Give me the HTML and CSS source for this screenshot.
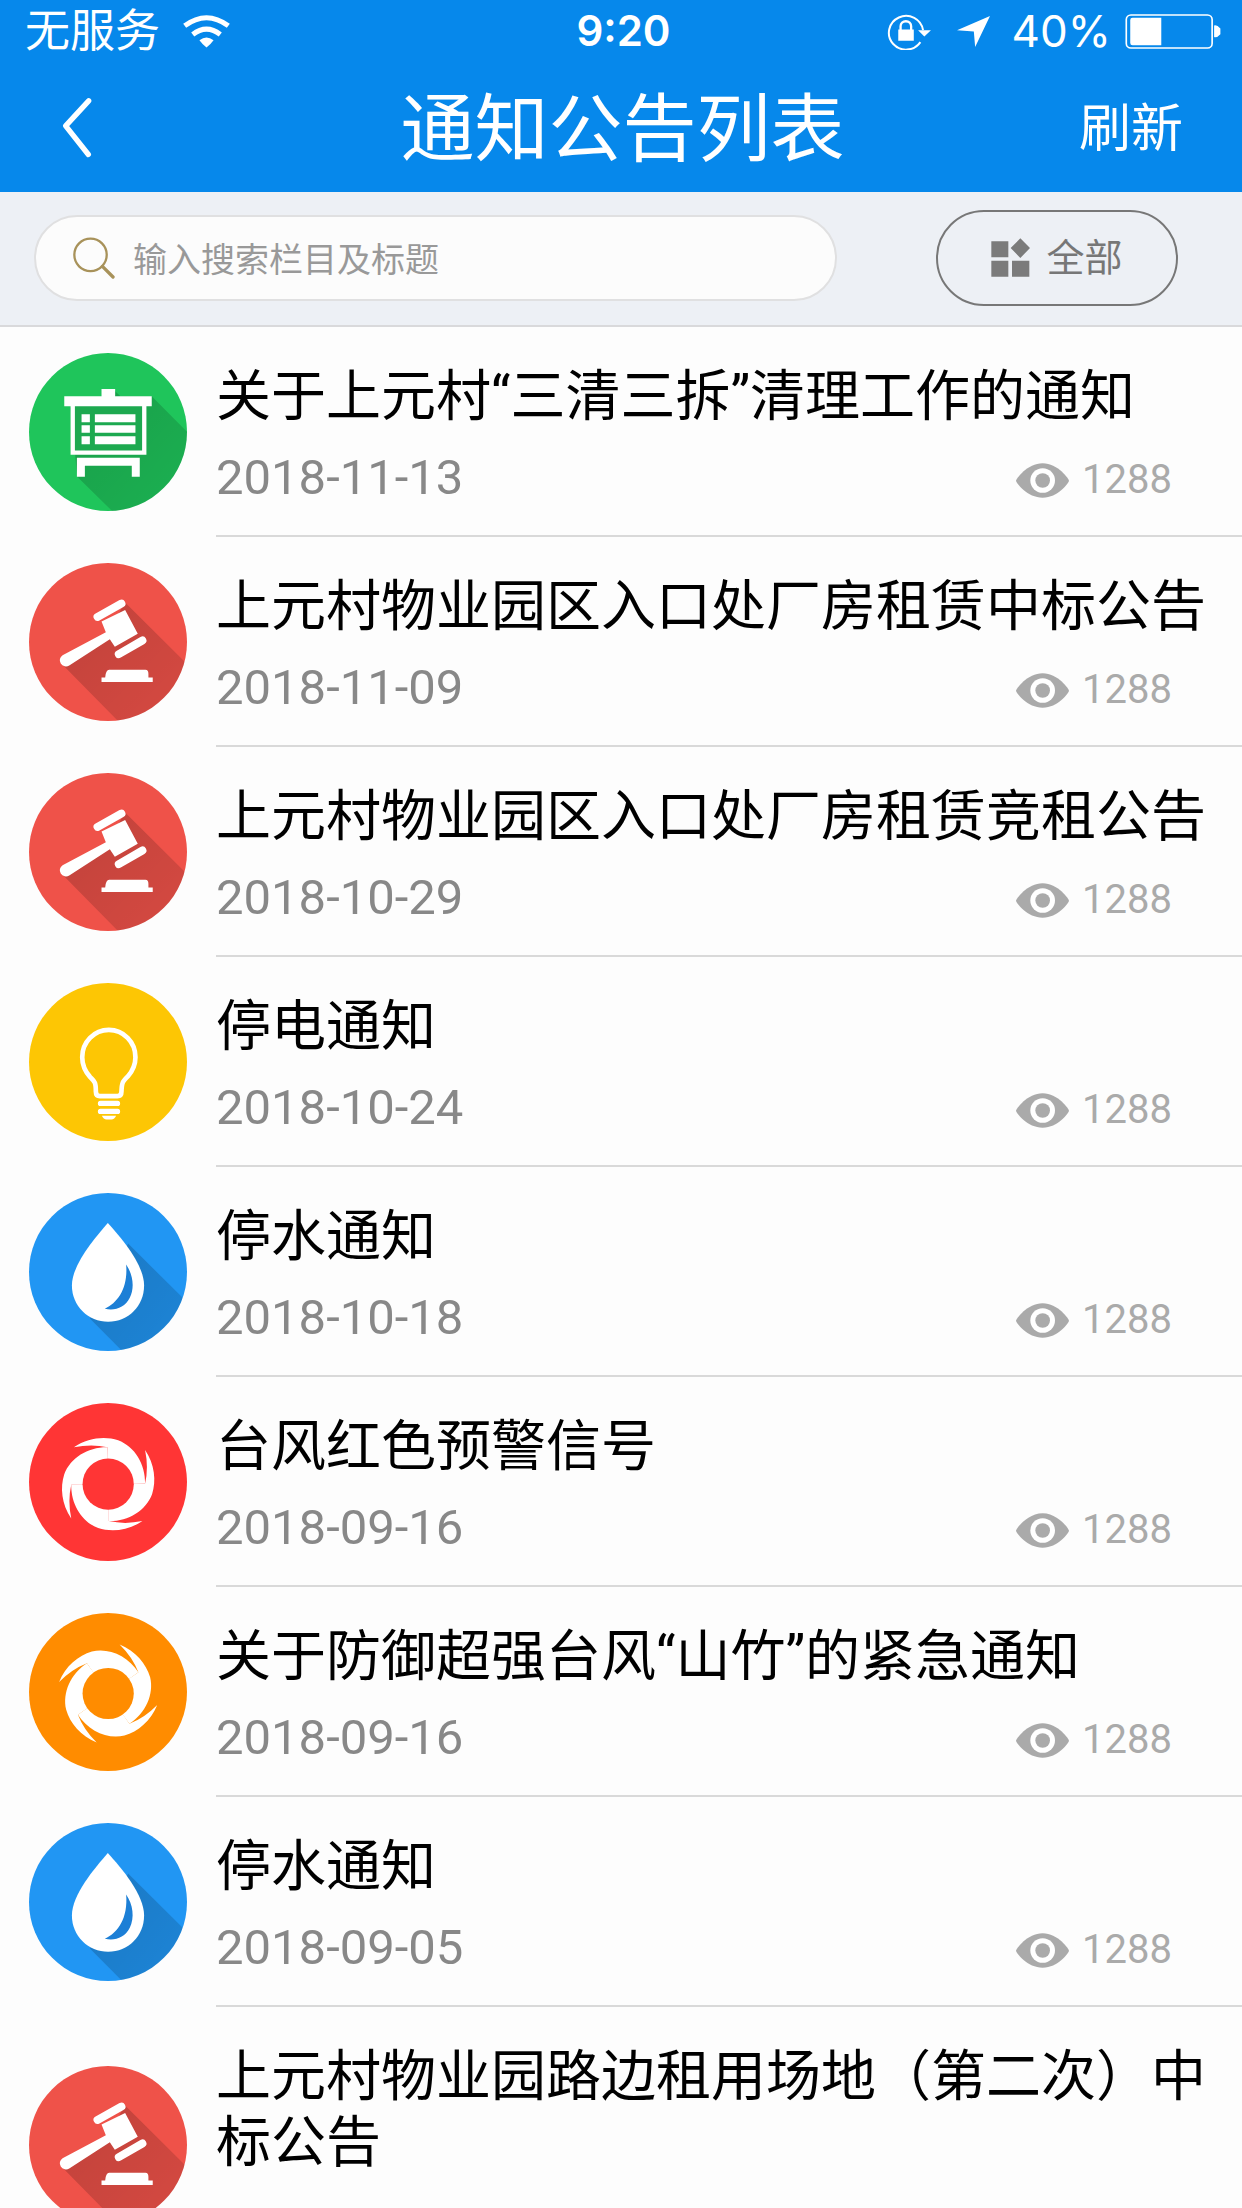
FILE: index.html
```html
<!DOCTYPE html>
<html lang="zh-CN">
<head>
<meta charset="utf-8">
<meta name="viewport" content="width=device-width, initial-scale=1">
<title>通知公告列表</title>
<link rel="stylesheet" href="styles.css">
</head>
<body>
<svg class="sprite" aria-hidden="true">
  <defs>
    <linearGradient id="shade" x1="0" y1="0" x2="1" y2="1">
      <stop offset="0" stop-color="#000" stop-opacity=".2"/>
      <stop offset="1" stop-color="#000" stop-opacity=".06"/>
    </linearGradient>
    <symbol id="board" viewBox="87 65 475 475">
      <path fill="url(#shade)" d="M346 180L362 195H456L700 440V720H520L232 437L212 230Z"/>
      <path fill="#fff" d="M305 173H346V195H456V225H440V371H212V225H193V195H305Z"/>
      <path fill="#1da950" d="M225 225H427V358H225Z"/>
      <path fill="#fff" d="M245 249H270V273H245ZM285 249H407V273H285ZM245 282H270V305H245ZM285 282H407V305H285ZM245 315H270V339H245ZM285 315H407V339H285ZM231 380H420V437H396V404H255V437H231Z"/>
    </symbol>
    <symbol id="gavel" viewBox="87 67 475 475">
      <path fill="url(#shade)" d="M376 186L700 507V720H530L188 373L320 280Z"/>
      <path fill="none" stroke="#fff" stroke-width="24" stroke-linecap="round" d="M293 229L365 189M357 341L428 300"/>
      <path fill="#fff" d="M305 243L376 208L414 280L345 319L330 296L208 375A18 18 0 0 1 188 344L318 275Z"/>
      <path fill="#fff" d="M305 411H316Q318 388 328 388H437Q446 388 446 400V411H459V425H305Z"/>
    </symbol>
    <symbol id="bulb" viewBox="87 69 475 475">
      <path fill="none" stroke="#fff" stroke-width="14" d="M288 395C288 366 284 365 271 352C255 334 247 318 247 292A80 82 0 0 1 407 292C407 320 397 335 384 350C368 366 366 368 365 395Q365 409 353 409H300Q288 409 288 395Z"/>
      <path stroke="#fff" stroke-width="16" stroke-linecap="round" d="M302 431H353M302 455H353"/>
      <path fill="#fff" d="M306 468H349Q344 479 335 479H320Q311 479 306 468Z"/>
    </symbol>
    <symbol id="drop" viewBox="87 700 475 475">
      <path fill="url(#shade)" d="M385 852L700 1165V1410H600L270 1077Z"/>
      <path fill="#fff" d="M324 790C285 835 216 915 216 978C216 1040 265 1087 325 1087C385 1087 433 1040 433 978C433 915 365 835 324 790Z"/>
      <path fill="#1c7fd6" d="M379 915C400 945 405 985 390 1015C375 1045 345 1055 315 1048C355 1030 385 985 379 915Z"/>
    </symbol>
    <g id="blade">
      <path d="M-1 1L-2 -111Q-50 -122 -103 -111C-60 -140 -10 -145 30 -132C80 -113 112 -60 111 -2L1 1Z"/>
    </g>
    <symbol id="swirl" viewBox="-238 -244 475 475">
      <g fill="#fff">
        <use href="#blade"/>
        <use href="#blade" transform="rotate(90)"/>
        <use href="#blade" transform="rotate(180)"/>
        <use href="#blade" transform="rotate(270)"/>
      </g>
      <circle r="77" fill="currentColor"/>
    </symbol>
    <symbol id="swirl-turned" viewBox="-238 -242 475 475">
      <g fill="#fff" transform="rotate(56)">
        <use href="#blade"/>
        <use href="#blade" transform="rotate(90)"/>
        <use href="#blade" transform="rotate(180)"/>
        <use href="#blade" transform="rotate(270)"/>
      </g>
      <circle r="77" fill="currentColor"/>
    </symbol>
    <symbol id="eye" viewBox="237 297 159 104">
      <path fill="#aaa" d="M237 350C237 344 271 297 317 297C362 297 396 344 396 350C396 356 362 401 317 401C271 401 237 356 237 350Z"/>
      <circle cx="317" cy="349" r="37" fill="#fff"/>
      <circle cx="317" cy="349" r="22" fill="#aaa"/>
    </symbol>
  </defs>
</svg>

<div class="app">
  <header class="header">
    <div class="status">
      <div class="status-left">
        <span class="carrier">无服务</span>
        <svg class="wifi" viewBox="0 0 140 98" aria-hidden="true">
          <g fill="none" stroke="#fff" stroke-width="15"><path d="M5 32Q70 -16 135 32"/><path d="M29 58Q70 26 111 58"/></g>
          <path fill="#fff" d="M49 75Q70 58 91 75Q85 84 70 97Q55 84 49 75Z"/>
        </svg>
      </div>
      <span class="clock">9:20</span>
      <div class="status-right">
        <svg class="lock" viewBox="78 32 136 112" aria-hidden="true">
          <path fill="none" stroke="#fff" stroke-width="6" d="M182 120A52 51 0 1 1 190 84"/>
          <path fill="#fff" d="M175 84H214L194 103ZM115 82H162V116H115Z"/>
          <path fill="none" stroke="#fff" stroke-width="7" d="M122 84V72A16 15 0 0 1 154 72V84"/>
        </svg>
        <svg class="arrow" viewBox="290 44 100 94" aria-hidden="true"><path fill="#fff" d="M390 44L345 138L341 91L290 87Z"/></svg>
        <span class="percent">40%</span>
        <svg class="battery" viewBox="794 38 292 106" aria-hidden="true">
          <rect x="797" y="41" width="260" height="100" rx="14" fill="none" stroke="#fff" stroke-width="5"/>
          <path fill="#fff" d="M816 49H903V133H816Q809 133 809 126V56Q809 49 816 49ZM1063 73Q1071 70 1082 82V99Q1071 111 1063 108Z"/>
        </svg>
      </div>
    </div>
    <nav class="nav">
      <button class="back" type="button" aria-label="返回">
        <svg class="chevron" viewBox="188 288 90 182" aria-hidden="true"><path fill="none" stroke="#fff" stroke-width="16" stroke-linecap="round" stroke-linejoin="round" d="M268 299L199 374L267 460"/></svg>
      </button>
      <h1 class="title">通知公告列表</h1>
      <button class="refresh" type="button">刷新</button>
    </nav>
  </header>

  <form class="tools">
    <label class="search">
      <svg class="glass" viewBox="218 709 127 127" aria-hidden="true">
        <g fill="none" stroke="#a8925a"><circle cx="271" cy="763" r="49" stroke-width="7"/><path stroke-width="10" stroke-linecap="round" d="M307 798L339 830"/></g>
      </svg>
      <input class="field" type="search" placeholder="输入搜索栏目及标题" aria-label="输入搜索栏目及标题">
    </label>
    <button class="filter" type="button">
      <svg class="tiles" viewBox="396 712 117 117" aria-hidden="true"><path fill="#7b7b7b" d="M397 722H448V770H397ZM397 780H448V828H397ZM459 780H511V828H459ZM484 713L513 742L484 772L455 742Z"/></svg>
      全部
    </button>
  </form>

  <main class="list-wrap">
    <ul class="list">
      <li><a class="row" href="#"><svg class="badge green"><use href="#board"/></svg><div class="body"><h2 class="name">关于上元村“三清三拆”清理工作的通知</h2><div class="meta"><time class="date">2018-11-13</time><span class="views"><svg class="eye"><use href="#eye"/></svg>1288</span></div></div></a></li>
      <li><a class="row" href="#"><svg class="badge coral"><use href="#gavel"/></svg><div class="body"><h2 class="name">上元村物业园区入口处厂房租赁中标公告</h2><div class="meta"><time class="date">2018-11-09</time><span class="views"><svg class="eye"><use href="#eye"/></svg>1288</span></div></div></a></li>
      <li><a class="row" href="#"><svg class="badge coral"><use href="#gavel"/></svg><div class="body"><h2 class="name">上元村物业园区入口处厂房租赁竞租公告</h2><div class="meta"><time class="date">2018-10-29</time><span class="views"><svg class="eye"><use href="#eye"/></svg>1288</span></div></div></a></li>
      <li><a class="row" href="#"><svg class="badge yellow"><use href="#bulb"/></svg><div class="body"><h2 class="name">停电通知</h2><div class="meta"><time class="date">2018-10-24</time><span class="views"><svg class="eye"><use href="#eye"/></svg>1288</span></div></div></a></li>
      <li><a class="row" href="#"><svg class="badge blue"><use href="#drop"/></svg><div class="body"><h2 class="name">停水通知</h2><div class="meta"><time class="date">2018-10-18</time><span class="views"><svg class="eye"><use href="#eye"/></svg>1288</span></div></div></a></li>
      <li><a class="row" href="#"><svg class="badge red"><use href="#swirl"/></svg><div class="body"><h2 class="name">台风红色预警信号</h2><div class="meta"><time class="date">2018-09-16</time><span class="views"><svg class="eye"><use href="#eye"/></svg>1288</span></div></div></a></li>
      <li><a class="row" href="#"><svg class="badge orange"><use href="#swirl-turned"/></svg><div class="body"><h2 class="name">关于防御超强台风“山竹”的紧急通知</h2><div class="meta"><time class="date">2018-09-16</time><span class="views"><svg class="eye"><use href="#eye"/></svg>1288</span></div></div></a></li>
      <li><a class="row" href="#"><svg class="badge blue"><use href="#drop"/></svg><div class="body"><h2 class="name">停水通知</h2><div class="meta"><time class="date">2018-09-05</time><span class="views"><svg class="eye"><use href="#eye"/></svg>1288</span></div></div></a></li>
      <li><a class="row" href="#"><svg class="badge coral"><use href="#gavel"/></svg><div class="body"><h2 class="name">上元村物业园路边租用场地（第二次）中标公告</h2><div class="meta"></div></div></a></li>
    </ul>
  </main>
</div>
</body>
</html>
```
FILE: styles.css
```css
* { box-sizing: border-box; }

body {
  margin: 0;
  background: #fdfdfd;
  color: #000;
  font-family: Roboto, "Noto Sans CJK SC", sans-serif;
}

button {
  padding: 0;
  border: 0;
  background: none;
  color: inherit;
  font: inherit;
  cursor: pointer;
}

svg { display: block; flex: none; }

.sprite { position: absolute; width: 0; height: 0; }

.app {
  display: flex;
  flex-direction: column;
  height: 100vh;
}

/* Blue header: status line and navigation */
.header {
  flex: none;
  background: #0688eb;
  color: #fff;
}

.status,
.nav {
  display: grid;
  grid-template-columns: 1fr auto 1fr;
  align-items: center;
}

.status {
  height: 62px;
  padding: 0 20px 0 25px;
  font-family: Inter, "Noto Sans CJK SC", sans-serif;
  font-size: 42px;
  line-height: 60px;
}

.status-left,
.status-right { display: flex; align-items: center; }
.status-right { justify-content: flex-end; }
.carrier { font-size: 45px; margin-right: 23px; }
.wifi { width: 47px; height: 33px; }
.clock { font-weight: 600; }
.lock { width: 45px; height: 37px; margin-right: 26px; }
.arrow { width: 33px; height: 31px; margin-right: 22px; }
.percent { font-size: 44px; margin-right: 14px; }
.battery { width: 97px; height: 35px; }

.nav {
  height: 130px;
  padding: 0 59px 0 62px;
}

.back { justify-self: start; }
.chevron { width: 30px; height: 61px; }
.title,
.refresh { padding-top: 5px; }
.title { margin: 0; font-size: 74px; font-weight: 400; line-height: 100px; }
.refresh { justify-self: end; font-size: 52px; line-height: 70px; }

/* Search and filter */
.tools {
  display: flex;
  flex: none;
  align-items: center;
  gap: 99px;
  height: 135px;
  padding: 0 64px 2px 34px;
  border-bottom: 2px solid #d9d9db;
  background: #edf0f5;
}

.search {
  display: flex;
  flex: 1;
  align-items: center;
  gap: 18px;
  height: 86px;
  padding: 0 37px;
  border: 2px solid #e0e0e1;
  border-radius: 43px;
  background: #fcfcfc;
}

.glass { width: 42px; height: 42px; }

.field {
  flex: 1;
  min-width: 0;
  height: 60px;
  padding: 0;
  border: 0;
  outline: 0;
  background: none;
  color: #555;
  font: 400 34px "Noto Sans CJK SC", sans-serif;
}

.field::placeholder { color: #999; opacity: 1; }

.filter {
  display: flex;
  align-items: center;
  justify-content: center;
  gap: 16px;
  width: 242px;
  height: 96px;
  border: 2px solid #777;
  border-radius: 48px;
  color: #777;
  font-size: 38px;
  line-height: 60px;
}

.tiles { width: 39px; height: 39px; }

/* Notice list */
.list-wrap {
  flex: 1;
  min-height: 0;
  overflow-y: auto;
  scrollbar-width: none;
}

.list { margin: 0; padding: 0; list-style: none; }

.row {
  display: flex;
  align-items: center;
  gap: 29px;
  padding-left: 29px;
  color: inherit;
  text-decoration: none;
}

.badge { width: 158px; height: 158px; border-radius: 50%; }
.green { background: #1fc55b; }
.coral { background: #ef5249; }
.yellow { background: #fdc604; }
.blue { background: #2196f3; }
.red { background: #ff3535; color: #ff3535; }
.orange { background: #ff8c00; color: #ff8c00; }

.body {
  flex: 1;
  padding: 36px 24px 27px 0;
  border-bottom: 2px solid #d9d9d9;
}

.name { margin: 0; font-size: 55px; font-weight: 400; line-height: 66px; }

.meta {
  display: flex;
  align-items: center;
  justify-content: space-between;
  height: 60px;
  margin-top: 19px;
  padding-right: 46px;
  color: #888;
}

.date { font-size: 49px; line-height: 60px; }

.views {
  display: flex;
  align-items: center;
  gap: 13px;
  padding-top: 4px;
  color: #aaa;
  font-size: 40px;
  line-height: 56px;
}

.eye { width: 53px; height: 35px; }
```
